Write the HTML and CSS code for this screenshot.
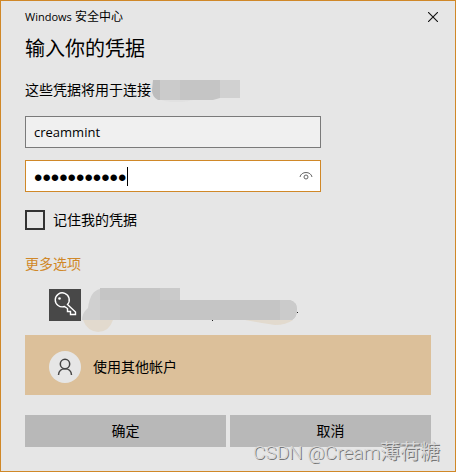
FILE: index.html
```html
<!DOCTYPE html>
<html lang="zh-CN">
<head>
  <meta charset="UTF-8">
  <meta name="viewport" content="width=device-width, initial-scale=1.0">
  <title>Windows 安全中心</title>
  <link rel="stylesheet" href="styles.css">
</head>
<body>
  <div class="dialog">
    <!-- Title bar -->
    <header class="title-bar">
      <span class="title"><span class="title-brand">Windows</span> 安全中心</span>
      <button class="close-button" type="button" aria-label="关闭">
        <svg width="10" height="10" viewBox="0 0 10 10"><path d="M0 0 L10 10 M10 0 L0 10" stroke="#111" stroke-width="1.1"/></svg>
      </button>
    </header>

    <form class="content">
      <h1>输入你的凭据</h1>
      <p class="message">这些凭据将用于连接<svg class="redacted-host" width="90" height="24" viewBox="0 -1 90 24" aria-hidden="true">
          <path d="M8 20 Q22 26 42 21 L42 18 L8 18 Z" fill="#e1e1e1"/>
          <path d="M2 1 H9 V21 H7 Q1 18 1 11 Z" fill="#bdbdbd"/>
          <path d="M9 1 H29 V21 H9 Z" fill="#cbcbcb"/>
          <path d="M29 1 H69 V19 L62 21 H29 Z" fill="#c5c5c5"/>
          <path d="M69 1 H89 V19 H69 Z" fill="#d1d1d1"/>
        </svg></p>

      <!-- Credentials -->
      <input class="field" type="text" id="username" aria-label="用户名" value="creammint">
      <div class="password-box">
        <input class="field password" type="password" id="password" aria-label="密码" value="creammint01">
        <span class="caret"></span>
        <button class="reveal-button" type="button" aria-label="显示密码">
          <svg width="14" height="10" viewBox="0 0 14 10" fill="none" stroke="#666">
            <path d="M1 6 C2 0 12 0 13 6"/>
            <circle cx="7" cy="6" r="2"/>
          </svg>
        </button>
      </div>
      <label class="remember"><input type="checkbox" id="remember">记住我的凭据</label>

      <!-- Account choices -->
      <a class="more" href="#">更多选项</a>
      <div class="accounts">
        <button class="account saved" type="button" aria-label="已保存的帐户">
          <svg class="tile" width="32" height="32" viewBox="0 0 32 32" fill="none" stroke="#fff" stroke-width="1.4">
            <rect width="32" height="32" fill="#484848" stroke="none"/>
            <path d="M18.500 15.500 L26.500 23 V25.500 H21.500 V22.500 H18.500 V19.500 L15.500 17.500 A7 7 0 1 1 18.500 15.500 Z"/>
            <circle cx="10.500" cy="9.500" r="1.300" fill="#fff" stroke="none"/>
          </svg>
          <svg class="redacted-user" width="218" height="44" viewBox="0 1 218 44" aria-hidden="true">
            <path d="M2 32 H32 Q28 44 17 44 Q6 43 2 32 Z" fill="#e2dace"/>
            <path d="M164 32 H212 Q205 37 194 37 Q180 35 164 32 Z" fill="#e2dace"/>
            <path d="M1 32 Q1 25 7 20 Q9 3 19 1 V32 Z" fill="#d0d0d0"/>
            <path d="M19 0 H99 V12 H209 Q216 14 216 22 Q216 29 211 32 H19 Z" fill="#c5c5c5"/>
            <path d="M79 0 H99 V12 H79 Z M19 12 H39 V32 H19 Z" fill="#cacaca"/>
            <path d="M199 12 H209 Q216 14 216 22 Q216 29 211 32 H199 Z" fill="#cbcbcb"/>
            <path d="M131 32 H132 V33 H131 Z M216 24 H217 V25 H216 Z" fill="#222"/>
          </svg>
        </button>
        <button class="account selected" type="button">
          <svg class="tile" width="32" height="32" viewBox="0 0 32 32" fill="none" stroke="#444" stroke-width="1.5">
            <circle cx="16" cy="16" r="16" fill="#e6e6e6" stroke="none"/>
            <circle cx="16" cy="13" r="4.700"/>
            <path d="M9.500 24 C9.500 15.500 22.500 15.500 22.500 24"/>
          </svg>
          使用其他帐户
        </button>
      </div>

      <div class="actions">
        <button class="action" type="submit">确定</button>
        <button class="action" type="button">取消</button>
      </div>
    </form>

    <div class="watermark"><span class="watermark-latin">CSDN @Cream</span>薄荷糖</div>
  </div>
</body>
</html>
```

FILE: styles.css
```css
* {
  box-sizing: border-box;
}

body {
  margin: 0;
  font-family: "Open Sans", "Noto Sans CJK SC", sans-serif;
  font-size: 14px;
  line-height: 20px;
  color: #000;
}

button, input {
  font: inherit;
  color: inherit;
}

button {
  border: none;
  padding: 0;
  background: none;
  cursor: pointer;
}

svg {
  display: block;
}

.dialog {
  position: relative;
  min-height: 100vh;
  background-color: #e6e6e6;
  border: 1px solid #d08828;
}

/* Title bar */
.title-bar {
  display: flex;
  justify-content: space-between;
  align-items: center;
  height: 32px;
  padding-left: 24px;
  font-size: 12px;
}

.title-brand {
  font-size: 11px;
}

.close-button {
  display: flex;
  align-items: center;
  justify-content: center;
  width: 44px;
  height: 32px;
}

.content {
  display: flex;
  flex-direction: column;
  align-items: flex-start;
  padding: 2px 24px 24px;
}

h1 {
  margin: 0;
  font-size: 20px;
  font-weight: 400;
  line-height: 28px;
}

.message {
  display: flex;
  align-items: center;
  height: 24px;
  margin: 15px 0 14px;
}

/* Credentials */
.field {
  width: 100%;
  max-width: 296px;
  height: 32px;
  padding: 0 8px;
  border: 1px solid #7a7a7a;
  border-radius: 0;
  background-color: #f0f0f0;
  font-size: 13px;
  outline: none;
}

.password-box {
  position: relative;
  width: 100%;
  max-width: 296px;
  margin: 12px 0 16px;
}

.password {
  display: block;
  padding: 3px 32px 0 8px;
  border-color: #d08828;
  background-color: #fff;
  font-family: "Liberation Sans", sans-serif;
  font-size: 24px;
}

.caret {
  position: absolute;
  top: 7px;
  left: 102px;
  width: 1px;
  height: 19px;
  background-color: #000;
}

.reveal-button {
  position: absolute;
  top: 0;
  right: 0;
  display: flex;
  align-items: center;
  justify-content: center;
  width: 30px;
  height: 32px;
}

.remember {
  display: flex;
  align-items: center;
  gap: 8px;
  height: 24px;
}

.remember input {
  appearance: none;
  width: 20px;
  height: 20px;
  margin: 0;
  border: 2px solid #333;
}

.more {
  margin: 22px 0 15px;
  color: #d08828;
  text-decoration: none;
}

/* Account choices */
.accounts {
  width: 100%;
}

.account {
  display: flex;
  align-items: center;
  gap: 12px;
  width: 100%;
  padding-left: 24px;
  text-align: left;
}

.saved {
  align-items: flex-start;
  gap: 0;
  height: 46px;
}

.redacted-user {
  overflow: visible;
}

.selected {
  height: 60px;
  padding-top: 4px;
  background-color: #dcc09a;
}

.tile {
  flex: none;
}

.actions {
  display: flex;
  gap: 4px;
  width: 100%;
  margin-top: 20px;
}

.action {
  flex: 1;
  height: 32px;
  background-color: #b8b8b8;
}

.watermark {
  position: absolute;
  right: 15px;
  bottom: 4px;
  font-size: 20px;
  line-height: 28px;
  color: #d8d8d8;
  text-shadow: 1px 1px 0 #777;
  pointer-events: none;
}

.watermark-latin {
  font-family: Roboto, sans-serif;
  font-size: 19px;
  font-weight: 300;
}
```
